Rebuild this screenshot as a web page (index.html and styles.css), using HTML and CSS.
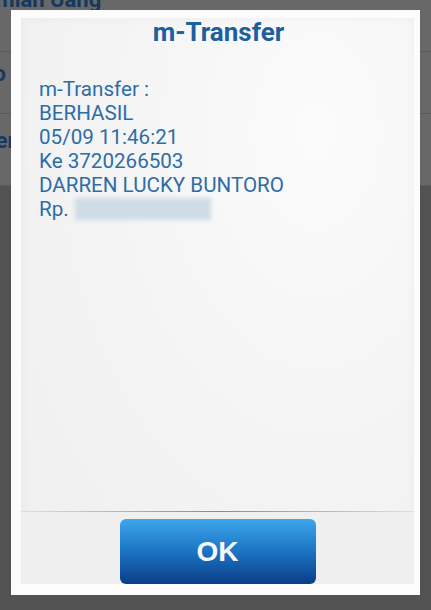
FILE: index.html
```html
<!DOCTYPE html>
<html>
<head>
<meta charset="utf-8">
<link rel="stylesheet" href="styles.css">
</head>
<body>
<div class="page">
  <div class="row row-top"><span class="bg-text">Jumlah Uang</span></div>
  <div class="row row-mid"><span class="bg-text small">Saldo</span></div>
  <div class="row row-low"><span class="bg-text small">Transfer</span></div>
  <div class="rest"></div>
</div>
<div class="overlay">
  <div class="dialog">
    <div class="panel">
      <div class="title">m-Transfer</div>
      <div class="message">
        <div>m-Transfer :</div>
        <div>BERHASIL</div>
        <div>05/09 11:46:21</div>
        <div>Ke 3720266503</div>
        <div>DARREN LUCKY BUNTORO</div>
        <div class="amount">Rp. <span class="blur"></span></div>
      </div>
      <div class="footer">
        <button class="ok">OK</button>
      </div>
    </div>
  </div>
</div>
</body>
</html>
```

FILE: styles.css
```css
html, body {
  margin: 0;
  padding: 0;
  width: 431px;
  height: 610px;
  overflow: hidden;
  background: #535353;
  font-family: Roboto, "Liberation Sans", sans-serif;
}
.page {
  display: flex;
  flex-direction: column;
  height: 610px;
}
.row {
  background: #686868;
  border-bottom: 1px solid #5a5a5a;
  display: flex;
  align-items: flex-start;
}
.row-top {
  height: 51px;
}
.row-mid {
  height: 61px;
}
.row-low {
  height: 71px;
}
.rest {
  flex: 1;
  background: #535353;
}
.bg-text {
  color: #14395e;
  font-weight: bold;
  font-size: 22px;
  line-height: 24px;
  margin-left: -29px;
  margin-top: -12px;
}
.row-mid .bg-text.small {
  margin-left: -50px;
  margin-top: 10px;
}
.row-low .bg-text.small {
  margin-left: -68px;
  margin-top: 15px;
}
.overlay {
  position: absolute;
  left: 11px;
  top: 10px;
}
.dialog {
  width: 409px;
  height: 585px;
  box-sizing: border-box;
  background: #fcfcfc;
  padding: 8px 6px 11px 10px;
}
.panel {
  height: 100%;
  display: flex;
  flex-direction: column;
  background: radial-gradient(ellipse at 75% 20%, #fbfbfb 0%, #f4f4f4 50%, #efefef 100%);
  box-shadow: inset 0 0 12px rgba(0,0,0,0.04);
}
.title {
  text-align: center;
  color: #1c5f9e;
  font-weight: bold;
  font-size: 26px;
  line-height: 28px;
  padding-top: 0px;
  padding-left: 2px;
}
.message {
  flex: 1;
  padding: 31px 0 0 18px;
  color: #2d6da6;
  font-size: 20.6px;
  line-height: 24px;
}
.amount {
  display: flex;
  align-items: center;
}
.blur {
  display: inline-block;
  width: 136px;
  height: 22px;
  margin-left: 6px;
  background: #cfdce5;
  filter: blur(2px);
}
.footer {
  display: flex;
  justify-content: center;
  padding-top: 7px;
  background: #efefef;
  border-top: 1px solid transparent;
  border-image: linear-gradient(to right, rgba(160,160,160,0.2), #8a8a8a 50%, rgba(160,160,160,0.2)) 1;
}
.ok {
  width: 196px;
  height: 65px;
  border: none;
  border-radius: 6px;
  background: linear-gradient(to bottom, #3ea6ea 0%, #1e79c7 45%, #0a3d88 100%);
  color: #f4f7fb;
  font-family: "Liberation Sans", Arial, sans-serif;
  font-weight: bold;
  font-size: 28px;
  padding: 0;
  cursor: pointer;
}
```
